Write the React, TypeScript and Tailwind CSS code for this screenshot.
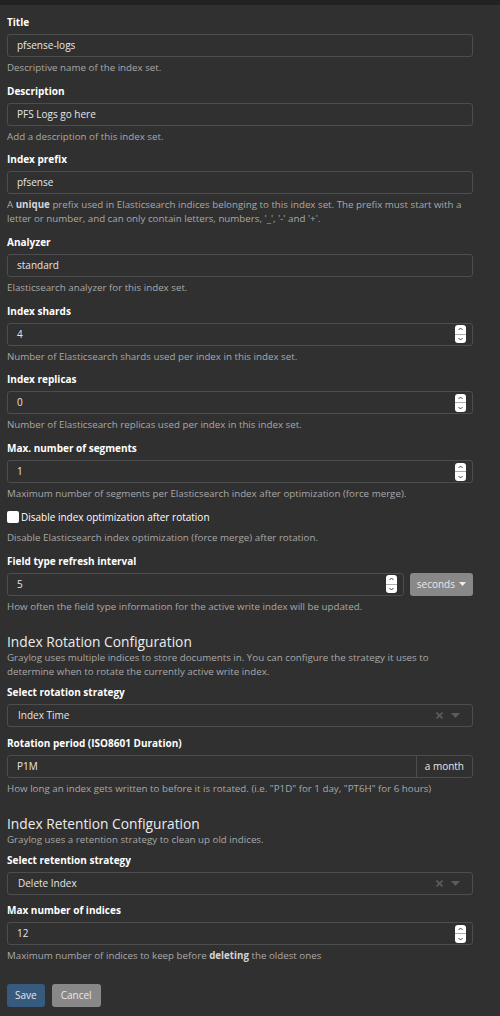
import React from "react";

const font = { fontFamily: '"Open Sans", "Noto Sans", sans-serif' };

function Label({ children }: { children: React.ReactNode }) {
  return <label className="block text-[10px] font-bold text-white leading-[15px] mb-[4px]">{children}</label>;
}

function Help({ children }: { children: React.ReactNode }) {
  return <p className="text-[9.75px] leading-[14px] text-[#a8a8a8] mt-[4px]">{children}</p>;
}

function Spinner() {
  return (
    <div className="flex flex-col items-center justify-between w-[11px] h-[18px] rounded-[3px] bg-white py-[1px]">
      <svg width="7" height="6" viewBox="0 0 7 6">
        <path d="M1.5 4 L3.5 2 L5.5 4" stroke="#444" strokeWidth="1" fill="none" />
      </svg>
      <div className="w-full h-px bg-[#aaa]" />
      <svg width="7" height="6" viewBox="0 0 7 6">
        <path d="M1.5 2 L3.5 4 L5.5 2" stroke="#444" strokeWidth="1" fill="none" />
      </svg>
    </div>
  );
}

function TextInput({ value, number }: { value: string; number?: boolean }) {
  return (
    <div className="flex items-center h-[23px] border border-[#4d4d4d] rounded-[3px] bg-[#303030] pl-[9px] pr-[6px]">
      <span className="flex-1 text-[10px] text-[#e6e6e6]">{value}</span>
      {number && <Spinner />}
    </div>
  );
}

function Select({ value }: { value: string }) {
  return (
    <div className="flex items-center h-[23px] border border-[#4d4d4d] rounded-[3px] bg-[#303030] pl-[10px] pr-[12px]">
      <span className="flex-1 text-[10px] text-[#e6e6e6]">{value}</span>
      <svg width="7" height="7" viewBox="0 0 7 7" className="mr-[8px]">
        <path d="M0.5 0.5 L6.5 6.5 M6.5 0.5 L0.5 6.5" stroke="#5c5c5c" strokeWidth="1.6" />
      </svg>
      <svg width="9" height="5" viewBox="0 0 9 5">
        <path d="M0 0 L9 0 L4.5 5 Z" fill="#5c5c5c" />
      </svg>
    </div>
  );
}

function Field({ label, children, help }: { label: string; children: React.ReactNode; help?: React.ReactNode }) {
  return (
    <div className="mb-[8.7px]">
      <Label>{label}</Label>
      {children}
      {help && <Help>{help}</Help>}
    </div>
  );
}

export default function App() {
  return (
    <div style={font} className="min-h-[1016px] bg-[#303030]">
      <div className="h-[5px] bg-[#222222]" />
      <div className="pl-[7px] pr-[27px] pt-[10px]">
        <Field label="Title" help="Descriptive name of the index set.">
          <TextInput value="pfsense-logs" />
        </Field>
        <Field label="Description" help="Add a description of this index set.">
          <TextInput value="PFS Logs go here" />
        </Field>
        <Field
          label="Index prefix"
          help={
            <>
              A <b className="text-[#d4d4d4]">unique</b> prefix used in Elasticsearch indices belonging to this index set. The prefix must start with a letter or number, and can only contain letters, numbers, '_', '-' and '+'.
            </>
          }
        >
          <TextInput value="pfsense" />
        </Field>
        <Field label="Analyzer" help="Elasticsearch analyzer for this index set.">
          <TextInput value="standard" />
        </Field>
        <Field label="Index shards" help="Number of Elasticsearch shards used per index in this index set.">
          <TextInput value="4" number />
        </Field>
        <Field label="Index replicas" help="Number of Elasticsearch replicas used per index in this index set.">
          <TextInput value="0" number />
        </Field>
        <Field label="Max. number of segments" help="Maximum number of segments per Elasticsearch index after optimization (force merge).">
          <TextInput value="1" number />
        </Field>
        <div className="mb-[9px]">
          <label className="flex items-center gap-[2px] text-[10px] text-white leading-[15px]">
            <span className="inline-block w-[12px] h-[12px] rounded-[2px] bg-white" />
            Disable index optimization after rotation
          </label>
          <p className="text-[9.75px] leading-[14px] text-[#a8a8a8] mt-[6px]">
            Disable Elasticsearch index optimization (force merge) after rotation.
          </p>
        </div>
        <Field label="Field type refresh interval" help="How often the field type information for the active write index will be updated.">
          <div className="flex gap-[6px]">
            <div className="flex-1">
              <TextInput value="5" number />
            </div>
            <button className="h-[23px] px-[7px] rounded-[3px] bg-[#888888] text-[10px] text-[#e8e8e8] flex items-center gap-[4px]">
              seconds
              <svg width="7" height="4" viewBox="0 0 7 4">
                <path d="M0 0 L7 0 L3.5 4 Z" fill="#eeeeee" />
              </svg>
            </button>
          </div>
        </Field>

        <h2 className="text-[13.75px] leading-[18px] text-[#ececec] mt-[19px]">Index Rotation Configuration</h2>
        <p className="text-[9.75px] leading-[14px] text-[#a8a8a8] mb-[6px]">
          Graylog uses multiple indices to store documents in. You can configure the strategy it uses to determine when to rotate the currently active write index.
        </p>
        <Field label="Select rotation strategy">
          <Select value="Index Time" />
        </Field>
        <Field label="Rotation period (ISO8601 Duration)" help={'How long an index gets written to before it is rotated. (i.e. "P1D" for 1 day, "PT6H" for 6 hours)'}>
          <div className="flex h-[23px] border border-[#4d4d4d] rounded-[3px] bg-[#303030]">
            <span className="flex-1 flex items-center pl-[9px] text-[10px] text-[#e6e6e6]">P1M</span>
            <span className="flex items-center border-l border-[#4d4d4d] px-[8px] text-[10px] text-[#e6e6e6]">a month</span>
          </div>
        </Field>

        <h2 className="text-[13.75px] leading-[18px] text-[#ececec] mt-[19px]">Index Retention Configuration</h2>
        <p className="text-[9.75px] leading-[14px] text-[#a8a8a8] mb-[6px]">Graylog uses a retention strategy to clean up old indices.</p>
        <Field label="Select retention strategy">
          <Select value="Delete Index" />
        </Field>
        <Field
          label="Max number of indices"
          help={
            <>
              Maximum number of indices to keep before <b className="text-[#d4d4d4]">deleting</b> the oldest ones
            </>
          }
        >
          <TextInput value="12" number />
        </Field>

        <div className="flex gap-[7px] mt-[21px]">
          <button className="h-[23px] px-[8px] rounded-[3px] bg-[#375a7f] text-[10px] text-[#e8e8e8]">Save</button>
          <button className="h-[23px] px-[9px] rounded-[3px] bg-[#888888] text-[10px] text-[#e8e8e8]">Cancel</button>
        </div>
      </div>
    </div>
  );
}
